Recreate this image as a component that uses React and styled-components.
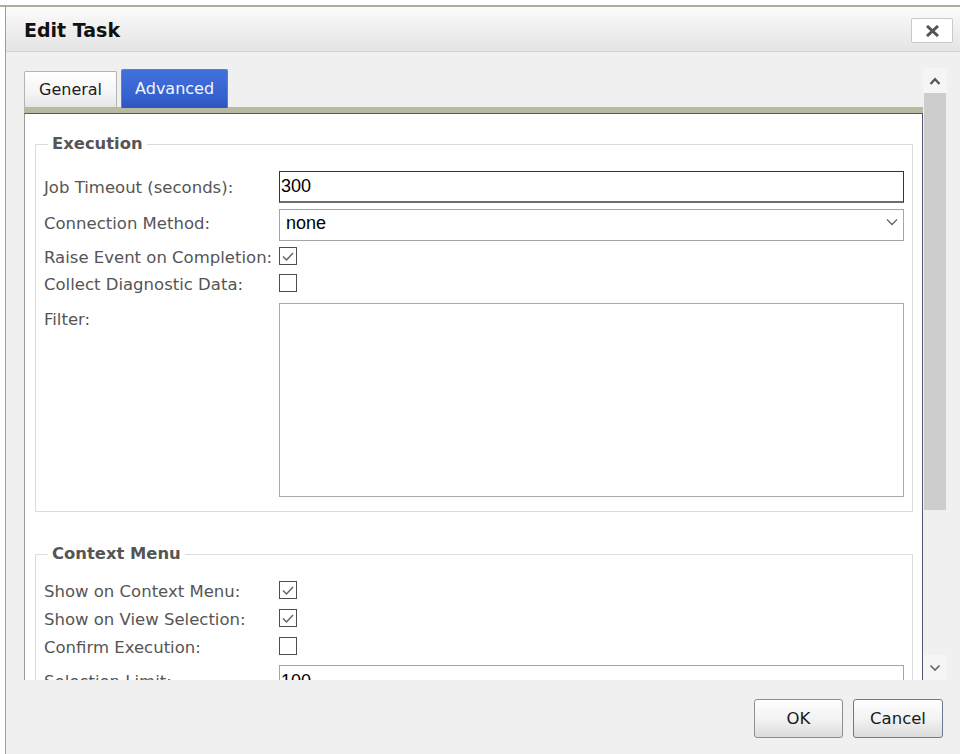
import React from 'react';
import styled, { createGlobalStyle } from 'styled-components';

const GlobalStyle = createGlobalStyle`
  html, body { margin: 0; padding: 0; background: #fff; }
  body { font-family: "DejaVu Sans", Verdana, sans-serif; }
  * { box-sizing: border-box; }
`;

const Page = styled.div`
  width: 960px;
  height: 754px;
  padding-top: 5px;
  display: flex;
  flex-direction: column;
  overflow: hidden;
`;

const Shell = styled.div`
  flex: 1;
  min-height: 0;
  display: flex;
  padding-left: 5px;
  border-top: 2px solid #adad9f;
`;

const Dialog = styled.section`
  flex: 1;
  min-width: 0;
  display: flex;
  flex-direction: column;
  background: #f0f0f0;
  border-left: 1px solid #9c9c9c;
`;

const TitleBar = styled.header`
  height: 45px;
  flex: none;
  display: flex;
  align-items: center;
  justify-content: space-between;
  padding: 0 7px 0 18px;
  background: linear-gradient(#fbfbfb, #e4e4e4);
  border-bottom: 1px solid #d2d2d2;
`;

const Title = styled.h1`
  margin: 2px 0 0;
  font: bold 19px/22px "DejaVu Sans", Verdana, sans-serif;
  color: #111;
`;

const CloseButton = styled.button`
  width: 42px;
  height: 25px;
  margin-top: 3px;
  padding: 0;
  display: grid;
  place-items: center;
  background: #fff;
  border: 1px solid #c9c9c9;
  border-radius: 2px;
`;

const Body = styled.div`
  flex: 1;
  min-height: 0;
  display: flex;
  padding: 16px 13px 0 18px;
`;

const TabArea = styled.div`
  flex: 1;
  min-width: 0;
  display: flex;
  flex-direction: column;
  overflow: hidden;
`;

const TabStrip = styled.div`
  height: 39px;
  flex: none;
  display: flex;
  align-items: flex-end;
  gap: 4px;
`;

const Tab = styled.button`
  position: relative;
  z-index: 1;
  height: ${p => (p.$active ? '39px' : '36px')};
  margin-bottom: ${p => (p.$active ? '-1px' : '0')};
  padding: 0 ${p => (p.$active ? '13px' : '14px')};
  font: 16px/20px "DejaVu Sans", Verdana, sans-serif;
  color: ${p => (p.$active ? '#f4f6ff' : '#1c1c28')};
  background: ${p =>
    p.$active
      ? 'linear-gradient(#4271dc, #3561cf 70%, #2d55bf)'
      : 'linear-gradient(#ffffff, #f4f4f4 60%, #e6e6e6)'};
  border: 1px solid ${p => (p.$active ? '#7d7d7d' : '#b4b4b4')};
  border-bottom: none;
  border-radius: 2px 2px 0 0;
`;

const TabBar = styled.div`
  height: 6px;
  flex: none;
  background: #b9b9a1;
`;

const Panel = styled.div`
  flex: 1;
  background: #fff;
  border: 1px solid #4f5872;
  border-left-color: #9a9a9a;
  border-bottom: none;
  padding: 20px 9px 0 10px;
`;

const Group = styled.fieldset`
  margin: ${p => (p.$spaced ? '32px 0 0' : '0')};
  min-width: 0;
  padding: 17px 8px 14px;
  border: 1px solid #dcdcdc;
`;

const Legend = styled.legend`
  margin-left: 4px;
  padding: 0 4px;
  font: bold 16.4px/20px "DejaVu Sans", Verdana, sans-serif;
  color: #555;
`;

const Form = styled.div`
  display: grid;
  grid-template-columns: 235px 1fr;
  row-gap: ${p => p.$gap}px;
  align-items: center;
`;

const Label = styled.label`
  font-size: 16.5px;
  line-height: 21px;
  color: #555;
  white-space: nowrap;
  align-self: ${p => (p.$top ? 'start' : 'center')};
  padding-top: ${p => (p.$top ? '8px' : '0')};
  margin-top: ${p => (p.$raised ? '-4px' : '0')};
`;

const TextInput = styled.input`
  width: 100%;
  height: 32px;
  margin: 0;
  padding: 0 1px;
  font: 18px "Liberation Sans", Arial, sans-serif;
  color: #000;
  background: #fff;
  border: 1px solid ${p => (p.$strong ? '#333' : '#a5a5a5')};
  border-bottom: ${p => (p.$strong ? '2px solid #6e6e6e' : '1px solid #a5a5a5')};
  border-radius: 0;
  outline: none;
`;

const SelectWrap = styled.div`
  position: relative;
  height: 32px;
`;

const Select = styled.select`
  appearance: none;
  width: 100%;
  height: 32px;
  margin: 0;
  padding: 0 30px 5px 6px;
  font: 18px "Liberation Sans", Arial, sans-serif;
  color: #000;
  background: #fff;
  border: 1px solid #a5a5a5;
  border-radius: 0;
  outline: none;
`;

const Chevron = styled.svg`
  position: absolute;
  right: 6px;
  top: 9px;
  pointer-events: none;
`;

const CheckCell = styled.div`
  height: 21px;
  display: flex;
  align-items: flex-start;
`;

const Box = styled.span`
  width: 18px;
  height: 18px;
  display: grid;
  place-items: center;
  background: #fff;
  border: 1px solid #4d4d4d;
`;

const TextArea = styled.textarea`
  width: 100%;
  height: 194px;
  margin: 2px 0 0;
  padding: 2px;
  resize: none;
  font: 18px "Liberation Sans", Arial, sans-serif;
  border: 1px solid #a9a9a9;
  border-radius: 0;
  outline: none;
`;

const Rail = styled.div`
  width: 24px;
  flex: none;
  display: flex;
  flex-direction: column;
`;

const RailButton = styled.div`
  height: 25px;
  flex: none;
  display: grid;
  place-items: center;
  background: #f5f5f5;
`;

const Thumb = styled.div`
  height: 417px;
  flex: none;
  margin: 0 1px;
  background: #cdcdcd;
`;

const Track = styled.div`
  flex: 1;
`;

const Footer = styled.footer`
  height: 74px;
  flex: none;
  display: flex;
  justify-content: flex-end;
  align-items: flex-start;
  gap: 10px;
  padding: 19px 17px 0 0;
`;

const Button = styled.button`
  width: ${p => p.$w}px;
  height: 39px;
  padding: 0;
  font: 16.5px/20px "DejaVu Sans", Verdana, sans-serif;
  color: #1a1a1a;
  background: linear-gradient(#fefefe, #f3f3f3 50%, #dcdcdc);
  border: 1px solid ${p => (p.$focused ? '#6d7892' : '#8e8e8e')};
  border-radius: 3px;
`;

const CheckBox = ({ checked }) => (
  <CheckCell>
    <Box>
      {checked && (
        <svg width="14" height="12" viewBox="0 0 14 12">
          <path d="M2 6.5 L5.5 10 L12 3" fill="none" stroke="#666" strokeWidth="1.5" />
        </svg>
      )}
    </Box>
  </CheckCell>
);

export default function App() {
  return (
    <>
      <GlobalStyle />
      <Page>
        <Shell>
          <Dialog>
            <TitleBar>
              <Title>Edit Task</Title>
              <CloseButton aria-label="Close">
                <svg width="17" height="12" viewBox="0 0 17 12">
                  <path d="M3 1 L14 11 M14 1 L3 11" stroke="#555" strokeWidth="3" />
                </svg>
              </CloseButton>
            </TitleBar>

            <Body>
              <TabArea>
                <TabStrip>
                  <Tab>General</Tab>
                  <Tab $active>Advanced</Tab>
                </TabStrip>
                <TabBar />
                <Panel>
                  <Group>
                    <Legend>Execution</Legend>
                    <Form $gap={6}>
                      <Label>Job Timeout (seconds):</Label>
                      <TextInput $strong defaultValue="300" />

                      <Label $raised>Connection Method:</Label>
                      <SelectWrap>
                        <Select defaultValue="none">
                          <option value="none">none</option>
                        </Select>
                        <Chevron width="12" height="8" viewBox="0 0 12 8">
                          <path d="M1 1.5 L6 6.5 L11 1.5" fill="none" stroke="#666" strokeWidth="1.4" />
                        </Chevron>
                      </SelectWrap>

                      <Label>Raise Event on Completion:</Label>
                      <CheckBox checked />

                      <Label>Collect Diagnostic Data:</Label>
                      <CheckBox />

                      <Label $top>Filter:</Label>
                      <TextArea />
                    </Form>
                  </Group>

                  <Group $spaced>
                    <Legend>Context Menu</Legend>
                    <Form $gap={7}>
                      <Label>Show on Context Menu:</Label>
                      <CheckBox checked />

                      <Label>Show on View Selection:</Label>
                      <CheckBox checked />

                      <Label>Confirm Execution:</Label>
                      <CheckBox />

                      <Label>Selection Limit:</Label>
                      <TextInput defaultValue="100" />
                    </Form>
                  </Group>
                </Panel>
              </TabArea>

              <Rail>
                <RailButton>
                  <svg width="12" height="8" viewBox="0 0 12 8">
                    <path d="M1.5 7 L6 2.2 L10.5 7" fill="none" stroke="#555" strokeWidth="2.2" />
                  </svg>
                </RailButton>
                <Thumb />
                <Track />
                <RailButton>
                  <svg width="12" height="8" viewBox="0 0 12 8">
                    <path d="M1.5 1.5 L6 6 L10.5 1.5" fill="none" stroke="#666" strokeWidth="1.6" />
                  </svg>
                </RailButton>
              </Rail>
            </Body>

            <Footer>
              <Button $w={89}>OK</Button>
              <Button $w={90} $focused>Cancel</Button>
            </Footer>
          </Dialog>
        </Shell>
      </Page>
    </>
  );
}
